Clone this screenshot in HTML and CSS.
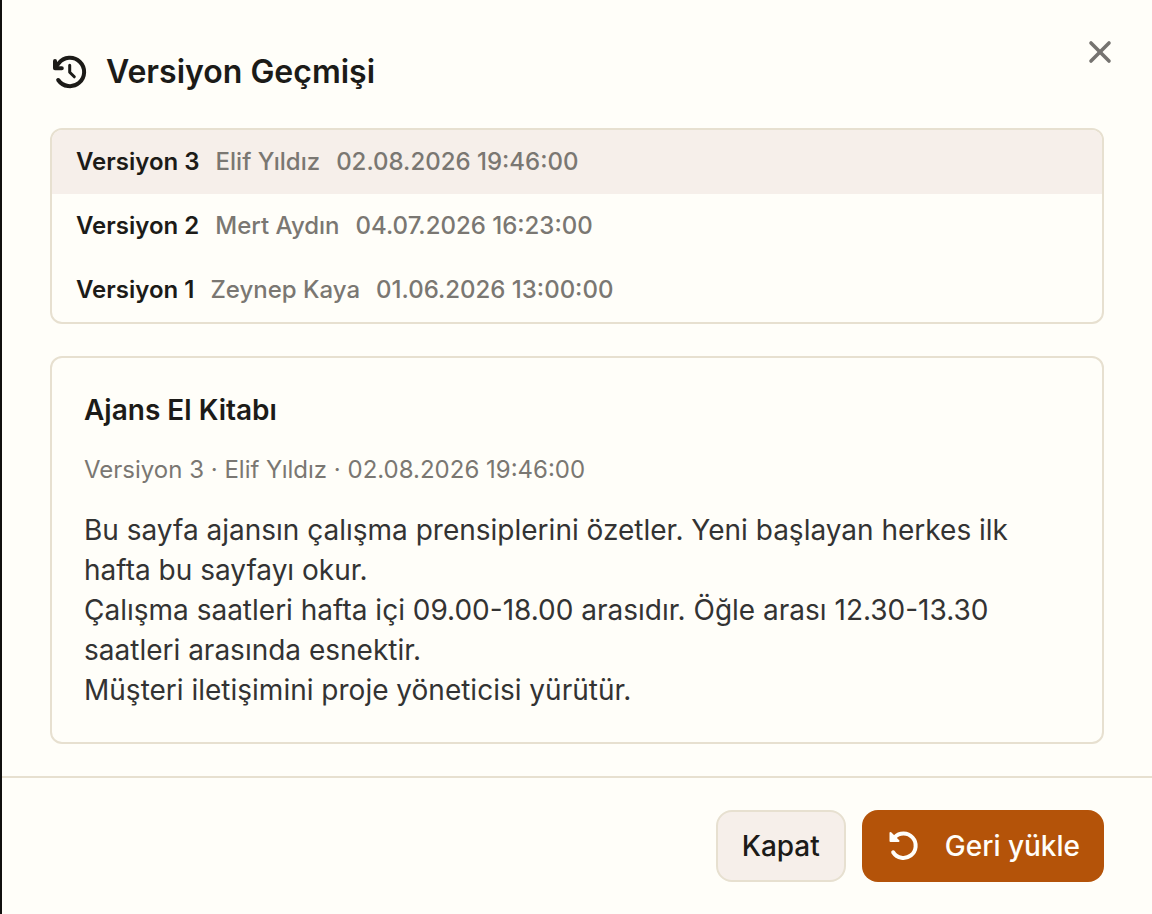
FILE: index.html
```html
<!DOCTYPE html>
<html lang="tr">
<head>
<meta charset="utf-8">
<title>Versiyon Geçmişi</title>
<link rel="stylesheet" href="styles.css">
</head>
<body>
<main class="dialog">
  <div class="dialog-body">
    <header class="header">
      <svg class="header-icon" viewBox="0 0 40 40" aria-hidden="true"><path d="M8.2 28A14.2 14.2 0 1 0 8.7 11.3L5.5 15.5"/><path d="M5 9v7.2h6.8"/><path class="hands" d="M19.7 13.2v7l4.6 4.6"/></svg>
      <h1 class="title">Versiyon Geçmişi</h1>
      <button class="close" type="button" aria-label="Kapat"><svg viewBox="0 0 24 24" aria-hidden="true"><path d="M18 6 6 18"/><path d="m6 6 12 12"/></svg></button>
    </header>
    <div class="versions">
      <button class="version is-selected" type="button"><strong>Versiyon 3</strong><span>Elif Yıldız</span><span>02.08.2026 19:46:00</span></button>
      <button class="version" type="button"><strong>Versiyon 2</strong><span>Mert Aydın</span><span>04.07.2026 16:23:00</span></button>
      <button class="version" type="button"><strong>Versiyon 1</strong><span>Zeynep Kaya</span><span>01.06.2026 13:00:00</span></button>
    </div>
    <article class="preview">
      <h2 class="preview-title">Ajans El Kitabı</h2>
      <p class="preview-meta">Versiyon 3 · Elif Yıldız · 02.08.2026 19:46:00</p>
      <p class="preview-text">Bu sayfa ajansın çalışma prensiplerini özetler. Yeni başlayan herkes ilk hafta bu sayfayı okur.
Çalışma saatleri hafta içi 09.00-18.00 arasıdır. Öğle arası 12.30-13.30 saatleri arasında esnektir.
Müşteri iletişimini proje yöneticisi yürütür.</p>
    </article>
  </div>
  <footer class="footer">
    <button class="button" type="button">Kapat</button>
    <button class="button button-primary" type="button"><svg viewBox="0 0 35 35" aria-hidden="true"><path class="arc" d="M7.2 23.3A12.2 12.2 0 1 0 8.6 8.3"/><path class="arrow" d="M4.5 4v8h8z"/></svg>Geri yükle</button>
  </footer>
</main>
</body>
</html>
```
FILE: styles.css
```css
* { box-sizing: border-box; }
body { margin: 0; background: #fffef9; color: #1c1b18; font-family: Inter, sans-serif; }
h1, h2, p { margin: 0; }
button { font: inherit; color: inherit; cursor: pointer; }
svg { flex: none; fill: none; stroke: currentColor; stroke-width: 2; stroke-linecap: round; stroke-linejoin: round; }
.dialog { min-height: 100vh; display: flex; flex-direction: column; border-left: 2px solid #11100e; }
.dialog-body { display: flex; flex-direction: column; gap: 32px; padding: 48px 48px 32px; }
.header { display: flex; align-items: center; gap: 16px; height: 48px; position: relative; }
.header-icon { width: 40px; height: 40px; stroke-width: 4; }
.header-icon .hands { stroke-width: 3; }
.title { font-size: 32px; line-height: 48px; font-weight: 600; }
.close { position: absolute; top: -16px; right: -16px; display: grid; place-items: center; width: 40px; height: 40px; padding: 0; border: 0; background: none; color: #757370; }
.close svg { width: 36px; height: 36px; stroke-width: 2.4; }
.versions { border: 2px solid #e7e0d0; border-radius: 12px; overflow: hidden; }
.version { display: flex; align-items: center; gap: 16px; width: 100%; height: 64px; padding: 0 24px; border: 0; background: none; font-size: 24px; line-height: 32px; font-weight: 500; color: #7a7772; text-align: left; }
.version strong { font-weight: 600; color: #1c1b18; }
.version.is-selected { background: #f6efea; }
.preview { border: 2px solid #e7e0d0; border-radius: 12px; padding: 32px; }
.preview-title { font-size: 28px; line-height: 40px; font-weight: 600; }
.preview-meta { margin: 24px 0; font-size: 24px; line-height: 32px; color: #7a7772; }
.preview-text { font-size: 28px; line-height: 40px; color: #333; white-space: pre-line; }
.footer { display: flex; justify-content: flex-end; gap: 16px; padding: 32px 48px; border-top: 2px solid #e7e0d0; }
.button { display: flex; align-items: center; height: 72px; padding: 0 24px; border: 2px solid #e7e0d0; border-radius: 16px; background: #f6efea; font-size: 28px; line-height: 40px; font-weight: 500; }
.button-primary { gap: 24px; border: 0; background: #b45309; color: #fffefa; }
.button-primary svg { width: 35px; height: 35px; }
.button-primary .arc { stroke-width: 4; }
.button-primary .arrow { fill: currentColor; }
```
